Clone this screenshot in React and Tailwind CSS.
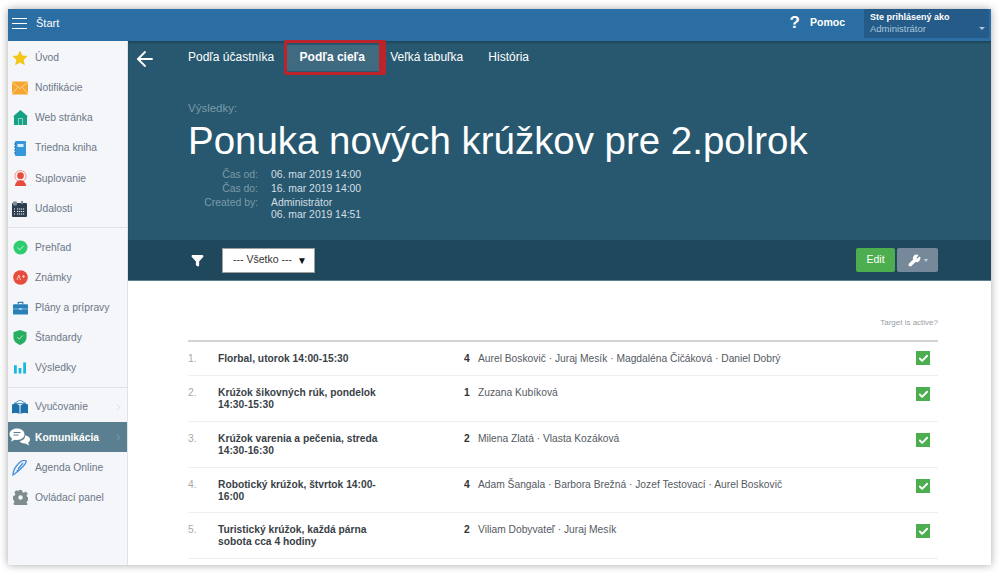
import React from 'react';
import { ChevronRight, ArrowLeft, Wrench, Check, Filter } from 'lucide-react';

const IconStar = () => (
  <svg width="16" height="16" viewBox="0 0 16 16"><path d="M8 .5l2.3 5 5.4.6-4 3.7 1.1 5.4L8 12.500l-4.800 2.700 1.100-5.400-4-3.700 5.400-.6z" fill="#f5c518" /></svg>
);
const IconMail = () => (
  <svg width="16" height="14" viewBox="0 0 16 14"><rect width="16" height="13" y=".5" fill="#f7a531" /><path d="M0 1l8 6.500L16 1M0 13l5.500-6.500M16 13l-5.500-6.500" stroke="#fde3b8" strokeWidth=".8" fill="none" /></svg>
);
const IconHome = () => (
  <svg width="15" height="15" viewBox="0 0 15 15"><path d="M7.500 0L15 6.500h-1V15H1V6.500H0z" fill="#16a085" /><rect x="5" y="8" width="5" height="7" fill="#7fd0bd" /><rect x="6" y="9" width="3" height="6" fill="#16a085" /></svg>
);
const IconBook = () => (
  <svg width="12" height="15" viewBox="0 0 12 15"><rect x="1" width="11" height="15" rx="1" fill="#3498db" /><rect x="3.500" y="3" width="6" height="3" fill="#d6ebf9" /><path d="M0 3h2M0 6h2M0 9h2M0 12h2" stroke="#1f6fa8" strokeWidth="1" /></svg>
);
const IconPerson = () => (
  <svg width="15" height="16" viewBox="0 0 16 17"><circle cx="8" cy="6.500" r="6" fill="none" stroke="#f0897d" strokeWidth=".9" /><circle cx="8" cy="6" r="3.600" fill="#e74c3c" /><path d="M2 17c.3-3.500 3-5.500 4.500-6h3c1.500.5 4.200 2.500 4.500 6z" fill="#e74c3c" /></svg>
);
const IconCalendar = () => (
  <svg width="16" height="16" viewBox="0 0 16 16"><rect y="2" width="15" height="14" rx="1" fill="#2c3e50" /><circle cx="3" cy="2.500" r="2.300" fill="#7f8c9a" /><rect x="9" width="2" height="3" fill="#7f8c9a" /><path d="M5 8h8M5 10.500h8M5 13h8M2 8h1M2 10.500h1M2 13h1" stroke="#fff" strokeWidth="1.100" strokeDasharray="1.200 .8" /></svg>
);
const IconCircleCheck = () => (
  <svg width="15" height="15" viewBox="0 0 15 15"><circle cx="7.500" cy="7.500" r="7" fill="#2ecc71" /><path d="M4.500 7.700l2.200 2.100 3.800-4" stroke="#c9f3da" strokeWidth="1" fill="none" /></svg>
);
const IconGrade = () => (
  <svg width="15" height="15" viewBox="0 0 15 15"><circle cx="7.500" cy="7.500" r="7.300" fill="#e74c3c" /><path d="M4 10l1.800-5 1.700 5M9 6.500h3M10.500 5v3" stroke="#f8c4be" strokeWidth="1" fill="none" /></svg>
);
const IconCase = () => (
  <svg width="15" height="14" viewBox="0 0 16 14"><path d="M5.500 3V1h5v2" stroke="#2980b9" strokeWidth="1.200" fill="none" /><rect y="3" width="16" height="11" rx="1" fill="#2980b9" /><path d="M0 8h16" stroke="#a9d2ec" strokeWidth=".7" /><rect x="6.500" y="7" width="3" height="2" fill="#a9d2ec" /></svg>
);
const IconShield = () => (
  <svg width="14" height="15" viewBox="0 0 15 16"><path d="M7.500 0l7 2.500V8c0 4-3.500 6.700-7 8-3.500-1.300-7-4-7-8V2.500z" fill="#27ae60" /><path d="M4.500 7.700l2.200 2.100 3.800-4" stroke="#bfeed2" strokeWidth="1" fill="none" /></svg>
);
const IconBars = () => (
  <svg width="12" height="12" viewBox="0 0 13 12"><rect y="3" width="3" height="9" fill="#1ab6dc" /><rect x="5" y="6" width="3" height="6" fill="#1ab6dc" /><rect x="10" width="3" height="12" fill="#1ab6dc" /></svg>
);
const IconOpenBook = () => (
  <svg width="16" height="15" viewBox="0 0 16 15"><path d="M8 0l6 3.500H2z" fill="none" stroke="#2980b9" strokeWidth=".8" /><path d="M0 4.500c3-.8 6-.5 7.500 1V14C6 13 3 12.700 0 13.500z" fill="#1f6fa8" /><path d="M16 4.500c-3-.8-6-.5-7.500 1V14c1.500-1 4.500-1.300 7.500-.5z" fill="#1f6fa8" /></svg>
);
const IconChat = () => (
  <svg width="22" height="21" viewBox="0 0 22 20">
    <path d="M8 1c4.400 0 7.500 2.500 7.500 5.800S12.400 12.500 8 12.500c-.8 0-1.500 0-2.200-.2L2 14l1-3C1.500 10 .5 8.500.5 6.800.5 3.500 3.600 1 8 1z" fill="#fff" />
    <path d="M4.500 5h7M4.500 7.500h5" stroke="#5a7f90" strokeWidth="1.100" />
    <path d="M16.500 8c2.800.5 4.500 2 4.500 4 0 1.300-.7 2.300-1.800 3l.8 3-3.500-2c-2.500.2-5-.6-6-2.500 3 0 5.800-2.300 5.500-5.500z" fill="#fff" />
  </svg>
);
const IconPen = () => (
  <svg width="16" height="16" viewBox="0 0 16 16"><path d="M1 15c0-4 2-8 6-12 2-2 5-3 7-2.500.8 2-1 4-3 6-3 3-6 6-10 8.500zM6 9l5-6M4.500 11l4-2" fill="none" stroke="#4a90d9" strokeWidth="1.300" /></svg>
);
const IconGear = () => (
  <svg width="15" height="15" viewBox="0 0 15 15"><path d="M6 0h3l.4 2 1.500.7 1.800-1.100 2 2.100-1.100 1.700.6 1.600 1.800.5v3l-1.900.4-.6 1.500 1.100 1.800-2.100 2-1.700-1.100-1.500.6-.4 1.800H6l-.4-1.900-1.500-.6-1.700 1.100-2.100-2.100 1.100-1.700-.6-1.500L0 9V6l1.800-.4.600-1.600-1.100-1.700 2.100-2.100L5 1.300l.6-.6z" fill="#7f8c8d" /><circle cx="7.500" cy="7.500" r="2.200" fill="#f4f6f9" /></svg>
);

const group1 = [
  { label: 'Úvod', icon: <IconStar /> },
  { label: 'Notifikácie', icon: <IconMail /> },
  { label: 'Web stránka', icon: <IconHome /> },
  { label: 'Triedna kniha', icon: <IconBook /> },
  { label: 'Suplovanie', icon: <IconPerson /> },
  { label: 'Udalosti', icon: <IconCalendar /> },
];
const group2 = [
  { label: 'Prehľad', icon: <IconCircleCheck /> },
  { label: 'Známky', icon: <IconGrade /> },
  { label: 'Plány a prípravy', icon: <IconCase /> },
  { label: 'Štandardy', icon: <IconShield /> },
  { label: 'Výsledky', icon: <IconBars /> },
];
const group3 = [
  { label: 'Vyučovanie', icon: <IconOpenBook />, arrow: true },
  { label: 'Komunikácia', icon: <IconChat />, arrow: true, active: true },
  { label: 'Agenda Online', icon: <IconPen /> },
  { label: 'Ovládací panel', icon: <IconGear /> },
];

const targets = [
  { name: 'Florbal, utorok 14:00-15:30', count: 4, people: ['Aurel Boskovič', 'Juraj Mesík', 'Magdaléna Čičáková', 'Daniel Dobrý'], h: 'h-[34px]' },
  { name: 'Krúžok šikovných rúk, pondelok 14:30-15:30', count: 1, people: ['Zuzana Kubíková'], h: 'h-[46px]' },
  { name: 'Krúžok varenia a pečenia, streda 14:30-16:30', count: 2, people: ['Milena Zlatá', 'Vlasta Kozáková'], h: 'h-[46px]' },
  { name: 'Robotický krúžok, štvrtok 14:00-16:00', count: 4, people: ['Adam Šangala', 'Barbora Brežná', 'Jozef Testovací', 'Aurel Boskovič'], h: 'h-[45px]' },
  { name: 'Turistický krúžok, každá párna sobota cca 4 hodiny', count: 2, people: ['Viliam Dobyvateľ', 'Juraj Mesík'], h: 'h-[46px]' },
];

function SideItem({ item }) {
  return (
    <div className={`flex items-center h-[30.2px] pr-[3px] text-[10.3px] ${item.active ? 'bg-[#5a7f90] text-white font-bold' : 'text-[#6d7688]'}`}>
      <span className="w-[24px] flex justify-center shrink-0">{item.icon}</span>
      <span className="ml-[3px]">{item.label}</span>
      {item.arrow && <ChevronRight size={11} className={`ml-auto ${item.active ? 'text-[#86a3b0]' : 'text-[#d5d9de]'}`} />}
    </div>
  );
}

function Sidebar() {
  return (
    <aside className="w-[120px] shrink-0 bg-[#f4f6f9] border-r border-[#dfe3e8]">
      <div className="pt-[1.5px] pb-[3.5px] border-b border-[#dfe3e8]">
        {group1.map(i => <SideItem key={i.label} item={i} />)}
      </div>
      <div className="pt-[4px] pb-[4px] border-b border-[#dfe3e8]">
        {group2.map(i => <SideItem key={i.label} item={i} />)}
      </div>
      <div className="pt-[4px]">
        {group3.map(i => <SideItem key={i.label} item={i} />)}
      </div>
    </aside>
  );
}

function Meta({ label, children }) {
  return (
    <div className="flex">
      <span className="w-[70px] text-right text-[#7c9aa8]">{label}</span>
      <span className="ml-[13px] text-[#d4dfe4]">{children}</span>
    </div>
  );
}

export default function App() {
  return (
    <div className="w-[1000px] h-[573px] bg-white pt-[9px] pl-[8px] overflow-hidden font-['Liberation_Sans',Arial,sans-serif]">
      <div className="w-[983px] h-[556px] flex flex-col bg-white shadow-[0_0_8px_rgba(0,0,0,0.35)]">
        <header className="h-[32px] shrink-0 bg-[#2b6ea3] flex items-center text-white">
          <div className="ml-[4px] w-[15px] flex flex-col gap-[3.5px] -mt-[3px]">
            <span className="block h-[1.5px] bg-white"></span>
            <span className="block h-[1.5px] bg-white"></span>
            <span className="block h-[1.5px] bg-white"></span>
          </div>
          <span className="ml-[9px] text-[11px] -mt-[4px]">Štart</span>
          <div className="ml-auto flex items-center -mt-[4px]">
            <span className="text-[17px] leading-[20px] font-bold mr-[10px]">?</span>
            <span className="text-[10.5px] font-bold">Pomoc</span>
          </div>
          <div className="ml-[19px] mr-[2px] w-[125px] h-[29px] self-start bg-[#245b88] rounded-[2px] pl-[6px] pt-[3px] relative">
            <div className="text-[9px] font-bold leading-[11px]">Ste prihlásený ako</div>
            <div className="text-[9.5px] leading-[12px] text-[#a9c6dd]">Administrátor</div>
            <span className="absolute right-[4px] top-[18px] border-x-[3px] border-x-transparent border-t-[3px] border-t-[#a9c6dd]"></span>
          </div>
        </header>

        <div className="flex flex-1 min-h-0">
          <Sidebar />
          <main className="flex-1 flex flex-col min-w-0">
            <section className="h-[199px] shrink-0 bg-[#27586f] text-white shadow-[inset_0_2px_2px_rgba(0,0,0,0.2)] relative">
              <nav className="flex items-start h-[30px] text-[12px] pt-[5px]">
                <ArrowLeft size={24} strokeWidth={1.8} className="ml-[5px] mt-[1px]" />
                <span className="ml-[31px] mt-[1px] leading-[20px]">Podľa účastníka</span>
                <span className="ml-[13px] w-[92px] h-[26px] -mt-[1px] bg-[#3f6a80] font-bold text-center leading-[24px] pr-[2px]">Podľa cieľa</span>
                <span className="ml-[11px] mt-[1px] leading-[20px]">Veľká tabuľka</span>
                <span className="ml-[25px] mt-[1px] leading-[20px]">História</span>
              </nav>
              <div className="absolute left-[156px] -top-[1px] w-[102px] h-[35px] border-[3px] border-r-[7px] border-[#bd232b] rounded-[2px]"></div>

              <div className="ml-[60px] mt-[30px]">
                <div className="text-[11.5px] leading-[14px] text-[#7c9aa8]">Výsledky:</div>
                <h1 className="text-[38.45px] leading-[46px] mt-[3px] whitespace-nowrap">Ponuka nových krúžkov pre 2.polrok</h1>
                <div className="text-[10.4px] leading-[14px] mt-[4px]">
                  <Meta label="Čas od:">06. mar 2019 14:00</Meta>
                  <Meta label="Čas do:">16. mar 2019 14:00</Meta>
                  <Meta label="Created by:">
                    <div className="leading-[11.5px] mt-[1px]">Administrátor</div>
                    <div className="leading-[11.5px]">06. mar 2019 14:51</div>
                  </Meta>
                </div>
              </div>
            </section>

            <section className="h-[41px] shrink-0 bg-[#1f485c] flex items-center border-b border-[#5d7e8d]">
              <Filter size={13} className="ml-[63px] text-white fill-white" />
              <div className="ml-[18px] w-[93px] h-[25px] bg-white border border-[#a0a0a0] flex items-center pl-[10px] pr-[7px] text-[10.5px] text-[#333]">
                <span>--- Všetko ---</span>
                <span className="ml-auto text-[10px] text-[#111]">▼</span>
              </div>
              <div className="ml-auto flex items-center gap-[2px] mr-[53px]">
                <button className="w-[39px] h-[24px] bg-[#4cae4f] text-white text-[10.5px] rounded-[2px]">Edit</button>
                <button className="w-[41px] h-[24px] bg-[#75899a] text-white rounded-[2px] flex items-center justify-center gap-[3px]">
                  <Wrench size={13} className="fill-white" />
                  <span className="border-x-[2.5px] border-x-transparent border-t-[3px] border-t-[#c6d0d8]"></span>
                </button>
              </div>
            </section>

            <section className="flex-1 pl-[60px] pr-[53px] pt-[36px] overflow-hidden">
              <div className="text-right text-[8px] leading-[12px] text-[#9aa0a6] pb-[11px]">Target is active?</div>
              <div className="border-t-2 border-[#d4d4d4]">
                {targets.map((t, idx) => (
                  <div key={t.name} className={`flex items-start border-b border-[#efefef] text-[10.25px] leading-[11.5px] ${t.h}`}>
                    <span className="w-[30px] pt-[11px] text-[#a8a8a8]">{idx + 1}.</span>
                    <span className="w-[165px] pt-[11px] text-[#3a3f47] font-bold">{t.name}</span>
                    <span className="ml-[81px] w-[14px] pt-[11px] text-[#333] font-bold">{t.count}</span>
                    <span className="pt-[11px] text-[#555a62] whitespace-nowrap">{t.people.join(' · ')}</span>
                    <span className={`ml-auto mr-[8px] w-[14px] h-[14px] bg-[#4cae4f] flex items-center justify-center ${idx === 0 ? 'mt-[9px]' : 'mt-[11px]'}`}>
                      <Check size={11} strokeWidth={4} className="text-white" />
                    </span>
                  </div>
                ))}
              </div>
            </section>
          </main>
        </div>
      </div>
    </div>
  );
}
